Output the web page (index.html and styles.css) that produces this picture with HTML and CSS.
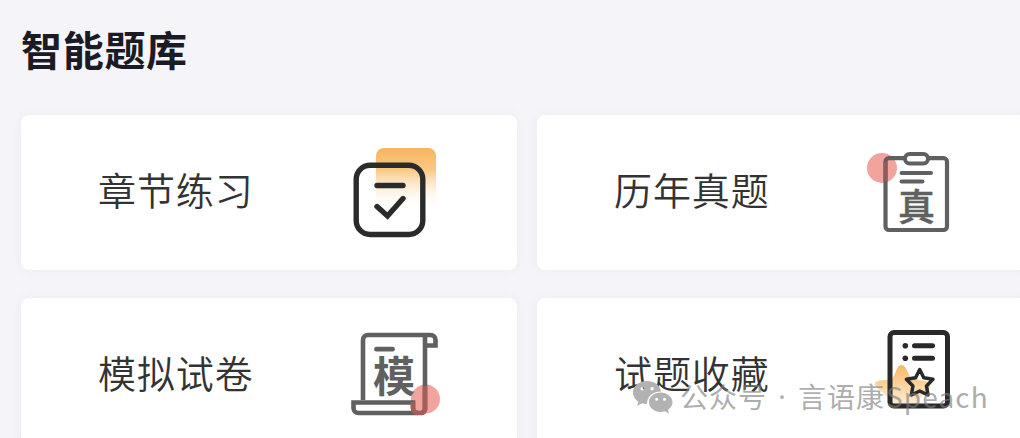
FILE: index.html
```html
<!DOCTYPE html>
<html lang="zh-CN">
<head>
<meta charset="utf-8">
<title>智能题库</title>
<link rel="stylesheet" href="styles.css">
</head>
<body>
<main class="page">
  <h1 class="title">智能题库</h1>
  <section class="grid">
    <a class="card">
      <span class="label">章节练习</span>
      <svg class="icon" width="110" height="115" viewBox="0 0 110 115" fill="none">
        <defs>
          <linearGradient id="fade" x1="0" y1="0" x2="0" y2="1">
            <stop offset="0" stop-color="#f7b55e"/>
            <stop offset=".35" stop-color="#fac883"/>
            <stop offset="1" stop-color="#fff" stop-opacity="0"/>
          </linearGradient>
        </defs>
        <rect x="36" y="13" width="60" height="62" rx="8" fill="url(#fade)"/>
        <rect x="16.200" y="30.200" width="66.600" height="69.300" rx="14" stroke="#2b2b2b" stroke-width="5.400"/>
        <path d="M37 50.500H63M37 71.500L47.500 81L63 63.500" stroke="#2b2b2b" stroke-width="5.400" stroke-linecap="round"/>
      </svg>
    </a>
    <a class="card card-right">
      <span class="label">历年真题</span>
      <svg class="icon" width="110" height="105" viewBox="0 0 110 105" fill="none">
        <circle cx="27" cy="28" r="15" fill="#f3a39d"/>
        <path d="M50 18.200H34a3.500 3.500 0 0 0-3.500 3.500V86.500a3.500 3.500 0 0 0 3.500 3.500H88.500a3.500 3.500 0 0 0 3.500-3.500V21.700a3.500 3.500 0 0 0-3.500-3.500H73" stroke="#606060" stroke-width="4.200"/>
        <path d="M30.500 22V41" stroke="#8c5e59" stroke-width="4.200"/>
        <rect x="50" y="14" width="23" height="9.500" rx="4.500" stroke="#606060" stroke-width="4"/>
        <path d="M46.500 33H76M46.500 41.600H67.500" stroke="#606060" stroke-width="4" stroke-linecap="round"/>
        <text class="glyph" x="43" y="80.500" font-size="37">真</text>
      </svg>
    </a>
    <a class="card">
      <span class="label">模拟试卷</span>
      <svg class="icon" width="110" height="111" viewBox="0 0 110 111" fill="none">
        <circle cx="85.500" cy="79" r="14.500" fill="#f3a39d"/>
        <path d="M23 80V20a5 5 0 0 1 5-5H90.500a5 5 0 0 1 5 5V25.500H85M85 15V89a4 4 0 0 1-4 4M13.500 82.500H73V88a5 5 0 0 0 5 5H18.500a5 5 0 0 1-5-5Z" stroke="#606060" stroke-width="4.600"/>
        <path d="M85 66V89a4 4 0 0 1-4 4H78a5 5 0 0 1-5-5V82" stroke="#a35e59" stroke-width="4.600"/>
        <path d="M36.500 29.200H52.500" stroke="#606060" stroke-width="4.800" stroke-linecap="round"/>
        <text class="glyph glyph-bold" x="33" y="72" font-size="42">模</text>
      </svg>
    </a>
    <a class="card card-right">
      <span class="label">试题收藏</span>
      <svg class="icon" width="110" height="111" viewBox="-5 0 110 111" fill="none">
        <defs>
          <linearGradient id="glow" x1="0" y1="0" x2="0" y2="1">
            <stop offset="0" stop-color="#f8b867"/>
            <stop offset="1" stop-color="#fff3df"/>
          </linearGradient>
        </defs>
        <path d="M41.500 45c3 0 4.500 3 7 8.500l2 5 12 2c8 1 10 5 5 10l-9 9 1 9H29l1-9-13-12c-4-4-2-6 3-7l12-1 3-6c2.500-5.500 3.500-8.500 6.500-8.500Z" fill="url(#glow)"/>
        <rect x="30" y="12.500" width="57.500" height="73.500" rx="4" stroke="#292929" stroke-width="5"/>
        <path d="M54.500 25.700H72.500M54.500 38.200H72.500" stroke="#292929" stroke-width="5" stroke-linecap="round"/>
        <circle cx="45.300" cy="25.700" r="2.800" fill="#292929"/>
        <circle cx="45.300" cy="38.200" r="2.800" fill="#292929"/>
        <path d="M59.700 49.500L63.800 57.800L73 59.300L66.500 65.900L68 75L59.700 71L51.400 75L52.900 65.900L46.400 59.300L55.600 57.800Z" stroke="#292929" stroke-width="3.500" stroke-linejoin="round"/>
      </svg>
    </a>
  </section>
  <div class="watermark">
    <svg class="wechat" width="42" height="36" viewBox="0 0 42 36">
      <path fill="#b2b2b2" fill-rule="evenodd" d="M15 2C7 2 1 7 1 13.500c0 4 2 7 5.500 9.200L5 27l5.200-2.700c1.500.5 3.200.7 4.800.7C15 17 21 12.500 29 12.500 28 6 22 2 15 2ZM10.300 8a1.800 1.800 0 1 1 0 3.600a1.800 1.800 0 0 1 0-3.600ZM20 8a1.800 1.800 0 1 1 0 3.600A1.800 1.800 0 0 1 20 8Z"/>
      <path fill="#b2b2b2" fill-rule="evenodd" d="M28.500 13.500C22 13.500 17 18 17 23.300S22 33 28.500 33c1.600 0 3-.3 4.400-.7L37 34.500l-1-3.800c2.800-1.800 4.500-4.500 4.500-7.400C40.500 18 35 13.500 28.500 13.500ZM24.700 18.700a1.500 1.500 0 1 1 0 3a1.500 1.500 0 0 1 0-3ZM32.500 18.700a1.500 1.500 0 1 1 0 3a1.500 1.500 0 0 1 0-3Z"/>
    </svg>
    <span class="account">公众号</span>
    <span class="dot">·</span>
    <span class="name">言语康<span class="latin">Speach</span></span>
  </div>
</main>
</body>
</html>
```

FILE: styles.css
```css
* {
  box-sizing: border-box;
}

body {
  margin: 0;
  background: #f4f4f9;
  font-family: "Noto Sans CJK SC", sans-serif;
}

.page {
  position: relative;
  height: 438px;
  padding: 18px 0 0 21px;
  overflow: hidden;
}

.title {
  margin: 0 0 37px;
  font-size: 41px;
  line-height: 60px;
  font-weight: 700;
  letter-spacing: 0.7px;
  color: #1b1b25;
}

.grid {
  display: grid;
  grid-template-columns: 496px 496px;
  grid-auto-rows: 155px;
  gap: 28px 20px;
}

.card {
  display: flex;
  align-items: center;
  padding-left: 77px;
  border-radius: 8px;
  background: #fff;
  box-shadow: 0 0 12px rgba(60, 60, 70, 0.05);
}

.label {
  width: 242px;
  padding-bottom: 8px;
  font-size: 38px;
  font-weight: 350;
  line-height: 56px;
  letter-spacing: 0.9px;
  color: #333;
}

.card-right .label {
  width: 241px;
}

.icon {
  flex: none;
}

.glyph {
  fill: #606060;
  stroke: #606060;
  stroke-width: 0.5px;
  font-weight: 500;
}

.glyph-bold {
  stroke: none;
  font-weight: 700;
}

.watermark {
  position: absolute;
  left: 632px;
  top: 376px;
  display: flex;
  align-items: center;
  height: 40px;
  font-size: 28px;
  letter-spacing: 1px;
  color: rgba(125, 125, 125, 0.65);
  white-space: nowrap;
}

.wechat {
  margin-top: 2px;
}

.account {
  margin-left: 6px;
}

.dot {
  width: 31px;
  font-family: "Noto Sans", sans-serif;
  text-align: center;
}

.latin {
  margin-left: 1px;
  letter-spacing: 1.1px;
}
```
